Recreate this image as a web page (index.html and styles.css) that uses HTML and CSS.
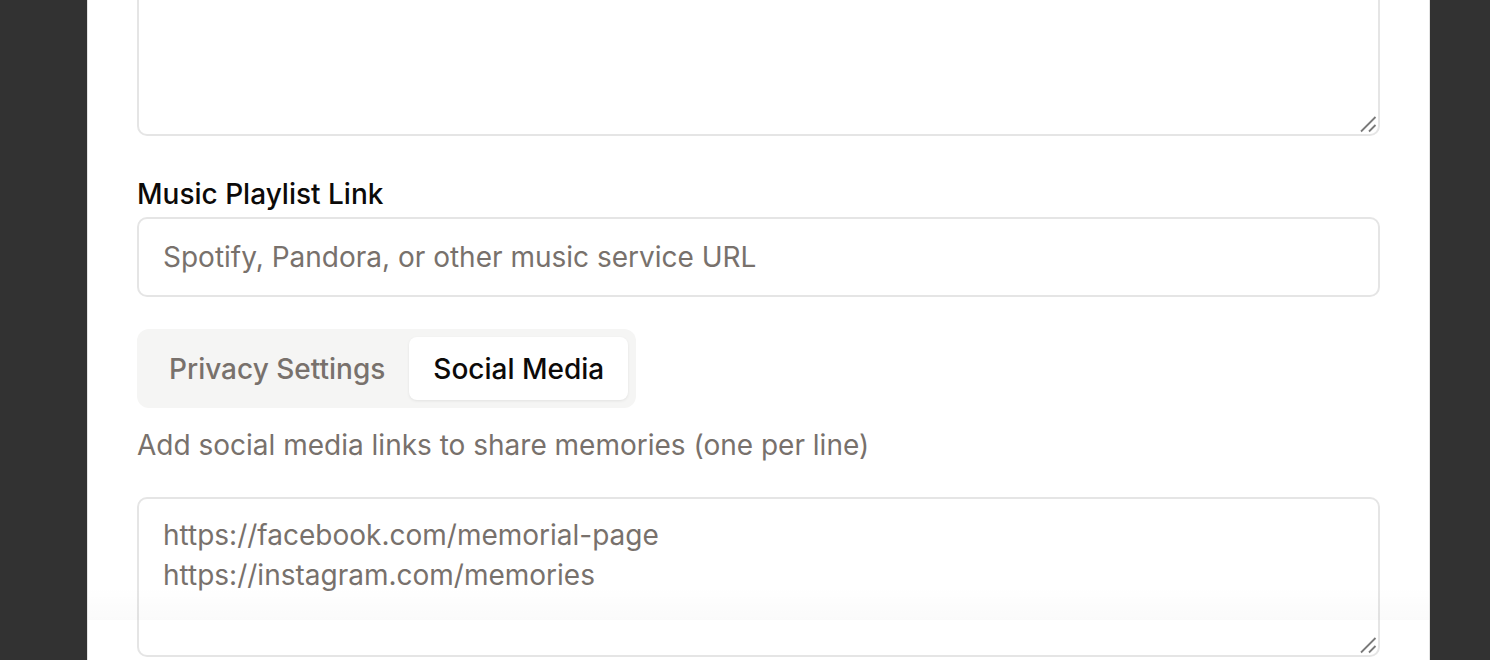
FILE: index.html
```html
<!DOCTYPE html>
<html lang="en">
<head>
<meta charset="utf-8">
<title>Memorial Form</title>
<link rel="stylesheet" href="styles.css">
</head>
<body>
<div class="page">
  <div class="card">
    <div class="area-wrap">
      <textarea class="textarea top-area" aria-label="Description"></textarea>
      <svg class="grip" width="20" height="20" viewBox="0 0 20 20" aria-hidden="true"><path d="M2 16.5 L16.5 2 M10 16.5 L16.5 10" stroke="#7a7a7a" stroke-width="1.8" fill="none"/></svg>
    </div>
    <div class="field">
      <label class="label" for="music">Music Playlist Link</label>
      <input id="music" class="input" type="text" placeholder="Spotify, Pandora, or other music service URL">
    </div>
    <div class="tabs">
      <div class="tab-list">
        <button class="tab">Privacy Settings</button>
        <button class="tab active">Social Media</button>
      </div>
      <p class="help">Add social media links to share memories (one per line)</p>
      <div class="area-wrap">
        <textarea class="textarea social" aria-label="Social media links">https://facebook.com/memorial-page
https://instagram.com/memories</textarea>
        <svg class="grip" width="20" height="20" viewBox="0 0 20 20" aria-hidden="true"><path d="M2 16.5 L16.5 2 M10 16.5 L16.5 10" stroke="#7a7a7a" stroke-width="1.8" fill="none"/></svg>
      </div>
    </div>
  </div>
  <div class="fade"></div>
</div>
</body>
</html>
```
FILE: styles.css
```css
* { box-sizing: border-box; }
html, body {
  margin: 0;
  padding: 0;
  height: 100%;
  overflow: hidden;
  background: #323232;
  font-family: Inter, "Noto Sans", sans-serif;
}
.page {
  position: relative;
  height: 660px;
}
.card {
  width: 1343px;
  margin-left: 87px;
  margin-top: -40px;
  background: #ffffff;
  border-left: 1px solid #e3e3e3;
  border-right: 1px solid #e3e3e3;
  padding: 0 49px 40px 49px;
  display: flex;
  flex-direction: column;
}
.field {
  display: flex;
  flex-direction: column;
}
.area-wrap {
  position: relative;
  display: flex;
}
.grip {
  position: absolute;
  right: 1px;
  bottom: 1px;
  pointer-events: none;
}
.textarea {
  display: block;
  width: 100%;
  border: 2px solid #e5e5e5;
  border-radius: 10px;
  background: #fff;
  font-family: Inter, "Noto Sans", sans-serif;
  font-size: 28px;
  line-height: 40px;
  color: #78716c;
  padding: 16px 24px;
  resize: none;
  outline: none;
}
.top-area {
  height: 176px;
}
.label {
  margin-top: 44px;
  font-size: 28px;
  line-height: 28px;
  font-weight: 500;
  color: #0c0a09;
}
.input {
  margin-top: 9px;
  height: 80px;
  width: 100%;
  border: 2px solid #e5e5e5;
  border-radius: 10px;
  padding: 0 24px;
  font-family: Inter, "Noto Sans", sans-serif;
  font-size: 28px;
  color: #0c0a09;
  outline: none;
}
.input::placeholder { color: #78716c; }
.tabs {
  display: flex;
  flex-direction: column;
  margin-top: 32px;
}
.tab-list {
  align-self: flex-start;
  display: flex;
  background: #f5f5f4;
  border-radius: 12px;
  padding: 8px;
  height: 79px;
}
.tab {
  border: 0;
  background: transparent;
  font-family: Inter, "Noto Sans", sans-serif;
  font-size: 28px;
  font-weight: 500;
  color: #78716c;
  padding: 0 24px;
  border-radius: 8px;
  cursor: pointer;
}
.tab.active {
  background: #ffffff;
  color: #0c0a09;
  box-shadow: 0 1px 3px rgba(0, 0, 0, 0.08);
}
.help {
  margin: 17px 0 0 0;
  font-size: 28px;
  line-height: 40px;
  color: #78716c;
}
.social {
  margin-top: 32px;
  height: 160px;
}
.fade {
  position: absolute;
  left: 88px;
  width: 1341px;
  bottom: 0;
  height: 33px;
  background: linear-gradient(to bottom, rgba(0,0,0,0), rgba(0,0,0,0.02));
  pointer-events: none;
}
```
